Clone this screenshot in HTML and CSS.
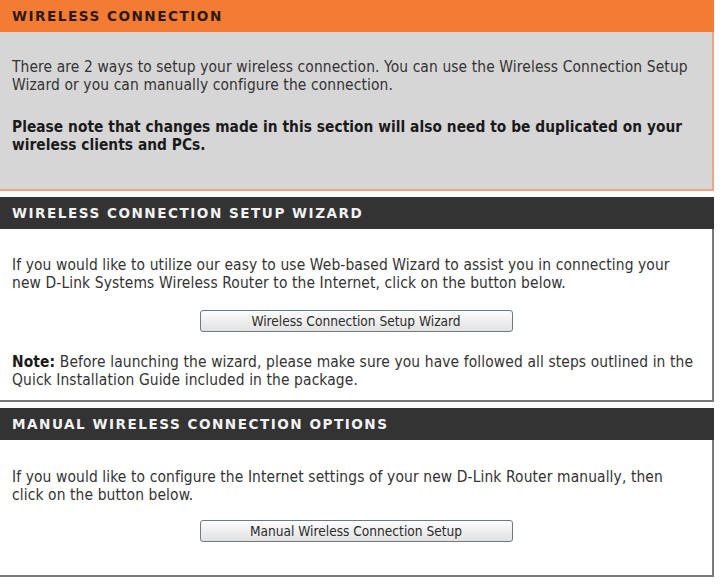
FILE: index.html
```html
<!DOCTYPE html>
<html lang="en">
<head>
<meta charset="utf-8">
<title>Wireless Connection</title>
<link rel="stylesheet" href="styles.css">
</head>
<body>
<div class="page">
  <section class="panel panel-intro">
    <h2 class="panel-title">WIRELESS CONNECTION</h2>
    <div class="panel-body">
      <p class="text">There are 2 ways to setup your wireless connection. You can use the Wireless Connection Setup<br>Wizard or you can manually configure the connection.</p>
      <p class="text text-strong">Please note that changes made in this section will also need to be duplicated on your<br>wireless clients and PCs.</p>
    </div>
  </section>

  <section class="panel panel-wizard">
    <h2 class="panel-title">WIRELESS CONNECTION SETUP WIZARD</h2>
    <div class="panel-body">
      <p class="text">If you would like to utilize our easy to use Web-based Wizard to assist you in connecting your<br>new D-Link Systems Wireless Router to the Internet, click on the button below.</p>
      <div class="btn-row"><button class="btn" type="button">Wireless Connection Setup Wizard</button></div>
      <p class="text"><b>Note:</b> Before launching the wizard, please make sure you have followed all steps outlined in the<br>Quick Installation Guide included in the package.</p>
    </div>
  </section>

  <section class="panel panel-manual">
    <h2 class="panel-title">MANUAL WIRELESS CONNECTION OPTIONS</h2>
    <div class="panel-body">
      <p class="text">If you would like to configure the Internet settings of your new D-Link Router manually, then<br>click on the button below.</p>
      <div class="btn-row"><button class="btn" type="button">Manual Wireless Connection Setup</button></div>
    </div>
  </section>
</div>
</body>
</html>
```

FILE: styles.css
```css
html, body {
  margin: 0;
  padding: 0;
  background: #ffffff;
}

.page {
  width: 714px;
  display: flex;
  flex-direction: column;
  gap: 6px;
  font-family: "DejaVu Sans Condensed", "DejaVu Sans", sans-serif;
  color: #333333;
}

.panel {
  display: flex;
  flex-direction: column;
}

.panel-title {
  margin: 0;
  height: 32px;
  display: flex;
  align-items: center;
  padding: 0 12px;
  font-family: "DejaVu Sans", sans-serif;
  font-weight: bold;
  font-size: 13.6px;
  letter-spacing: 1.5px;
  background: #333333;
  color: #f2f2f2;
}

.panel-body {
  background: #ffffff;
  border-right: 2px solid #7a7a7a;
  border-bottom: 2px solid #7a7a7a;
  padding: 27px 12px 12px 12px;
}

.panel-intro .panel-title {
  background: #f47b34;
  color: #2b1a10;
}

.panel-intro .panel-body {
  background: #d6d6d6;
  border-color: #f2a577;
  padding-top: 26px;
  padding-bottom: 35px;
}

.panel-wizard .panel-body {
  padding-top: 27px;
  padding-bottom: 11px;
}

.panel-manual .panel-body {
  padding-top: 28px;
  padding-bottom: 33px;
}

.text {
  margin: 0;
  font-size: 15.4px;
  letter-spacing: 0.12px;
  line-height: 18px;
}

.text + .text {
  margin-top: 24px;
}

.text-strong {
  font-weight: bold;
  font-size: 15.3px;
  letter-spacing: 0.05px;
  color: #1a1a1a;
}

.text b {
  font-weight: bold;
  color: #1a1a1a;
}

.btn-row {
  display: flex;
  justify-content: center;
  margin: 18px 0 21px;
}

.panel-manual .btn-row {
  margin: 16px 0 0;
}

.btn {
  width: 313px;
  height: 22px;
  padding: 0;
  border: 1px solid #6f7884;
  border-radius: 3px;
  background: linear-gradient(#fdfdfd, #ececec 60%, #e2e2e2);
  font-family: "DejaVu Sans Condensed", "DejaVu Sans", sans-serif;
  font-size: 13.6px;
  line-height: 16px;
  color: #2a2a2a;
}
```
